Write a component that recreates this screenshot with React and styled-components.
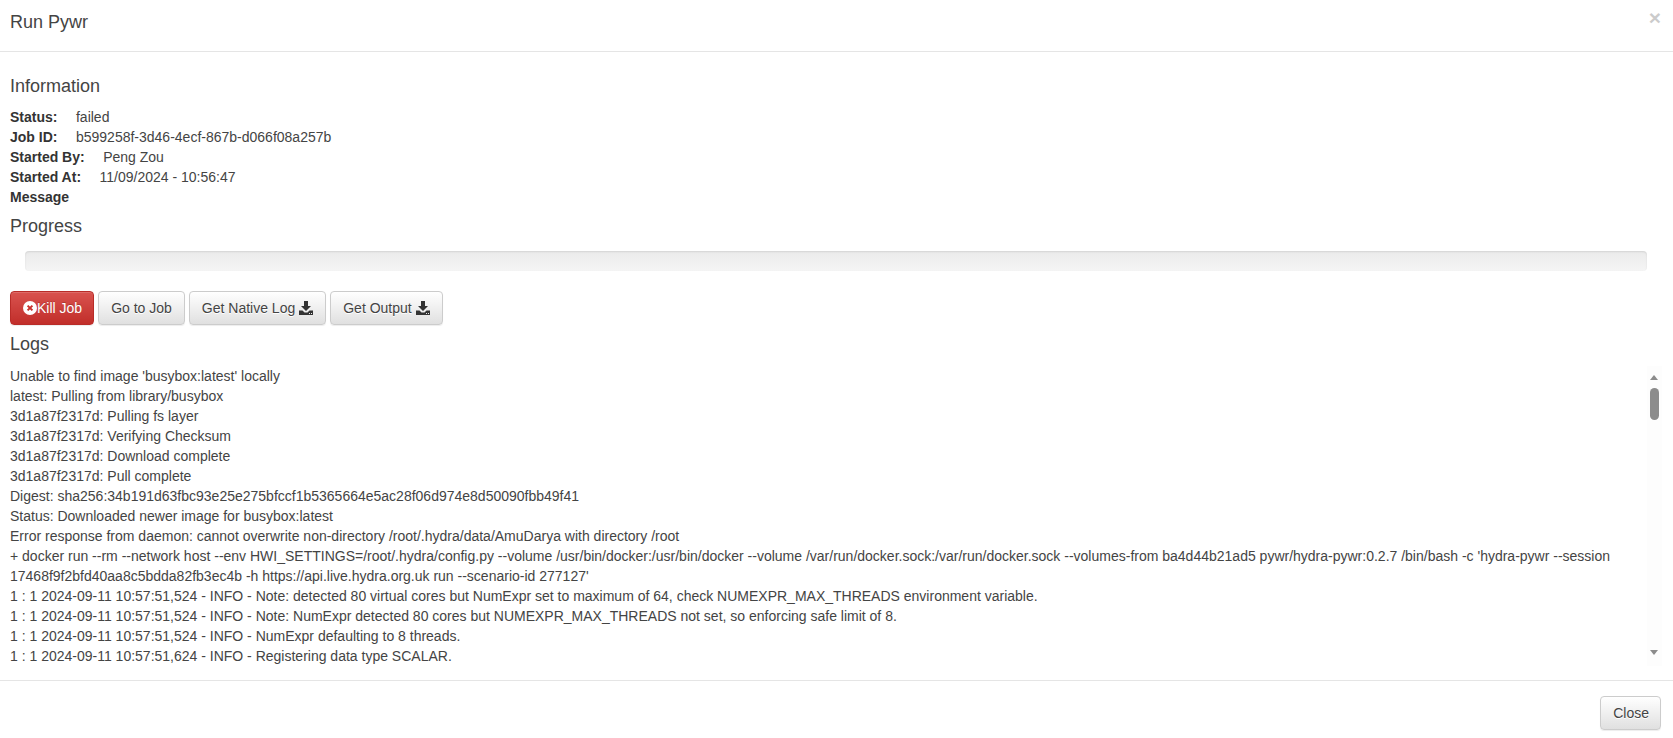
import styled, { createGlobalStyle } from 'styled-components';

const GlobalStyle = createGlobalStyle`
  * { box-sizing: border-box; }
  html, body { margin: 0; padding: 0; background: #fff; height: 100%; overflow: hidden; }
  body {
    font-family: "Liberation Sans", Arial, sans-serif;
    font-size: 14px;
    line-height: 20px;
    color: #444;
  }
`;

const Modal = styled.div`
  height: 738px;
  display: flex;
  flex-direction: column;
  background: #fff;
`;

const Header = styled.header`
  height: 52px;
  flex-shrink: 0;
  padding: 11px 12px 0 10px;
  border-bottom: 1px solid #e5e5e5;
  display: flex;
  justify-content: space-between;
  align-items: flex-start;
`;

const Title = styled.h4`
  margin: 0;
  font-size: 18px;
  font-weight: 400;
  line-height: 22px;
`;

const CloseX = styled.span`
  font-size: 21px;
  font-weight: 700;
  line-height: 14px;
  color: #000;
  opacity: 0.2;
`;

const Body = styled.div`
  flex: 1;
  min-height: 0;
  padding: 24px 11px 14px 10px;
  display: flex;
  flex-direction: column;
`;

const SectionTitle = styled.h4`
  margin: ${(p) => p.$top || 0}px 0 ${(p) => p.$bottom || 10}px;
  font-size: 18px;
  font-weight: 400;
  line-height: 20px;
`;

const InfoRow = styled.div`
  height: 20px;
  white-space: nowrap;
`;

const Label = styled.b`
  font-weight: 700;
  color: #333;
`;

const Value = styled.span`
  margin-left: 18.5px;
`;

const ProgressTrack = styled.div`
  height: 20px;
  margin: 5px 15px 20px 15px;
  background: linear-gradient(to bottom, #ebebeb 0%, #f5f5f5 100%);
  border-radius: 4px;
  box-shadow: inset 0 1px 2px rgba(0, 0, 0, 0.1);
`;

const Toolbar = styled.div`
  display: flex;
  gap: 4px;
  margin-bottom: 9px;
`;

const Button = styled.button`
  height: 34px;
  padding: 6px ${(p) => p.$padRight || 12}px 6px 12px;
  font: inherit;
  border-radius: 4px;
  display: inline-flex;
  align-items: center;
  gap: ${(p) => p.$gap || 0}px;
  border: 1px solid ${(p) => (p.$danger ? '#b92c28' : '#ccc')};
  color: ${(p) => (p.$danger ? '#fff' : '#444')};
  background: ${(p) =>
    p.$danger
      ? 'linear-gradient(to bottom, #d9534f 0%, #c12e2a 100%)'
      : 'linear-gradient(to bottom, #fff 0%, #e0e0e0 100%)'};
  text-shadow: ${(p) => (p.$danger ? '0 -1px 0 rgba(0,0,0,.2)' : '0 1px 0 #fff')};
  box-shadow: inset 0 1px 0 rgba(255, 255, 255, 0.15), 0 1px 1px rgba(0, 0, 0, 0.075);
`;

const LogArea = styled.div`
  position: relative;
  flex: 1;
  min-height: 0;
  padding-right: 15px;
  overflow: hidden;
`;

const LogLine = styled.div`
  line-height: 20px;
`;

const ScrollBar = styled.div`
  position: absolute;
  top: 0;
  right: 0;
  bottom: 0;
  width: 15px;
  background: #fdfdfd;
`;

const Thumb = styled.div`
  position: absolute;
  top: 22px;
  left: 3px;
  width: 9px;
  height: 32px;
  border-radius: 5px;
  background: #8c8c8c;
`;

const Arrow = styled.div`
  position: absolute;
  left: 3px;
  width: 0;
  height: 0;
  border-left: 4.5px solid transparent;
  border-right: 4.5px solid transparent;
  ${(p) =>
    p.$down
      ? 'bottom: 11px; border-top: 5px solid #8c8c8c;'
      : 'top: 9px; border-bottom: 5px solid #8c8c8c;'}
`;

const Footer = styled.footer`
  height: 58px;
  flex-shrink: 0;
  padding: 15px 12px 0;
  border-top: 1px solid #e5e5e5;
  display: flex;
  justify-content: flex-end;
  align-items: flex-start;
`;

const DownloadIcon = () => (
  <svg width="14" height="14" viewBox="0 0 14 14" fill="#333">
    <path d="M5 0h4v5h3L7 10 2 5h3z" />
    <path d="M0 9.5h3.5L5.5 11.5h3L10.5 9.5H14V14H0zM10 12v1h1v-1zm2 0v1h1v-1z" fillRule="evenodd" />
  </svg>
);

const RemoveIcon = () => (
  <svg width="14" height="14" viewBox="0 0 14 14">
    <circle cx="7" cy="7" r="7" fill="#fff" />
    <path d="M4.6 4.6l4.8 4.8M9.4 4.6l-4.8 4.8" stroke="#c9302c" strokeWidth="2" />
  </svg>
);

const logs = [
  "Unable to find image 'busybox:latest' locally",
  'latest: Pulling from library/busybox',
  '3d1a87f2317d: Pulling fs layer',
  '3d1a87f2317d: Verifying Checksum',
  '3d1a87f2317d: Download complete',
  '3d1a87f2317d: Pull complete',
  'Digest: sha256:34b191d63fbc93e25e275bfccf1b5365664e5ac28f06d974e8d50090fbb49f41',
  'Status: Downloaded newer image for busybox:latest',
  'Error response from daemon: cannot overwrite non-directory /root/.hydra/data/AmuDarya with directory /root',
  "+ docker run --rm --network host --env HWI_SETTINGS=/root/.hydra/config.py --volume /usr/bin/docker:/usr/bin/docker --volume /var/run/docker.sock:/var/run/docker.sock --volumes-from ba4d44b21ad5 pywr/hydra-pywr:0.2.7 /bin/bash -c 'hydra-pywr --session 17468f9f2bfd40aa8c5bdda82fb3ec4b -h https://api.live.hydra.org.uk run --scenario-id 277127'",
  '1 : 1 2024-09-11 10:57:51,524 - INFO - Note: detected 80 virtual cores but NumExpr set to maximum of 64, check NUMEXPR_MAX_THREADS environment variable.',
  '1 : 1 2024-09-11 10:57:51,524 - INFO - Note: NumExpr detected 80 cores but NUMEXPR_MAX_THREADS not set, so enforcing safe limit of 8.',
  '1 : 1 2024-09-11 10:57:51,524 - INFO - NumExpr defaulting to 8 threads.',
  '1 : 1 2024-09-11 10:57:51,624 - INFO - Registering data type SCALAR.',
];

export default function App() {
  return (
    <Modal>
      <GlobalStyle />
      <Header>
        <Title>Run Pywr</Title>
        <CloseX>×</CloseX>
      </Header>
      <Body>
        <SectionTitle $bottom={11}>Information</SectionTitle>
        <InfoRow><Label>Status:</Label><Value>failed</Value></InfoRow>
        <InfoRow><Label>Job ID:</Label><Value>b599258f-3d46-4ecf-867b-d066f08a257b</Value></InfoRow>
        <InfoRow><Label>Started By:</Label><Value>Peng Zou</Value></InfoRow>
        <InfoRow><Label>Started At:</Label><Value>11/09/2024 - 10:56:47</Value></InfoRow>
        <InfoRow><Label>Message</Label></InfoRow>
        <SectionTitle $top={9}>Progress</SectionTitle>
        <ProgressTrack />
        <Toolbar>
          <Button $danger $padRight={11}><RemoveIcon />Kill Job</Button>
          <Button>Go to Job</Button>
          <Button $gap={4}>Get Native Log <DownloadIcon /></Button>
          <Button $gap={4}>Get Output <DownloadIcon /></Button>
        </Toolbar>
        <SectionTitle $bottom={12}>Logs</SectionTitle>
        <LogArea>
          {logs.map((line) => <LogLine key={line}>{line}</LogLine>)}
          <ScrollBar>
            <Arrow />
            <Thumb />
            <Arrow $down />
          </ScrollBar>
        </LogArea>
      </Body>
      <Footer>
        <Button $padRight={11}>Close</Button>
      </Footer>
    </Modal>
  );
}
